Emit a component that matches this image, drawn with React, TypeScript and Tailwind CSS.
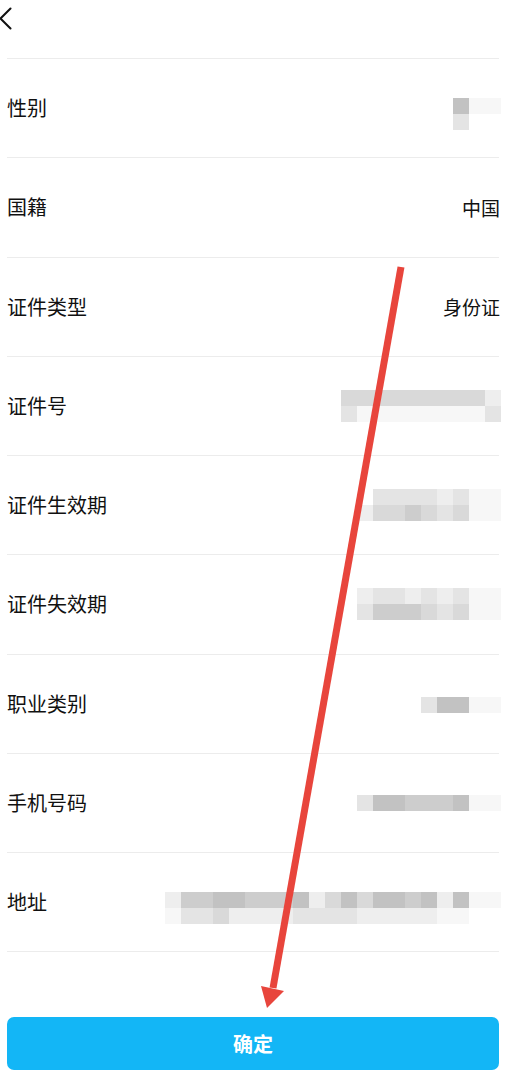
import React from "react";

const shade: Record<number, string> = {
  0: "bg-transparent",
  1: "bg-[#f7f7f7]",
  2: "bg-[#eeeeee]",
  3: "bg-[#e4e4e4]",
  4: "bg-[#d9d9d9]",
  5: "bg-[#cdcdcd]",
  6: "bg-[#c2c2c2]",
  7: "bg-[#b5b5b5]",
};

function Pix({ rows, cls = "" }: { rows: number[][]; cls?: string }) {
  return (
    <div className={"flex flex-col mr-[-2px] " + cls}>
      {rows.map((r, i) => (
        <div key={i} className="flex">
          {r.map((c, j) => (
            <div key={j} className={"w-[16px] h-[16px] " + shade[c]} />
          ))}
        </div>
      ))}
    </div>
  );
}

type Row = { label: string; value?: string; pix?: number[][]; pcls?: string };

const rows: Row[] = [
  { label: "性别", pix: [[6, 1, 1], [3, 0, 0]], pcls: "mt-[12px]" },
  { label: "国籍", value: "中国" },
  { label: "证件类型", value: "身份证" },
  {
    label: "证件号",
    pix: [
      [4, 4, 4, 4, 4, 4, 4, 4, 4, 2],
      [3, 1, 1, 1, 1, 1, 1, 1, 1, 3],
    ],
  },
  {
    label: "证件生效期",
    pix: [
      [0, 3, 3, 3, 3, 2, 3, 1, 1],
      [2, 4, 4, 5, 4, 3, 4, 1, 1],
    ],
  },
  {
    label: "证件失效期",
    pix: [
      [2, 3, 3, 2, 3, 2, 3, 1, 1],
      [3, 5, 5, 5, 4, 3, 4, 1, 1],
    ],
  },
  { label: "职业类别", pix: [[3, 6, 6, 1, 1]], pcls: "mt-[2px]" },
  { label: "手机号码", pix: [[3, 6, 6, 5, 5, 5, 6, 1, 1]] },
  {
    label: "地址",
    pix: [
      [2, 5, 5, 6, 6, 5, 5, 5, 6, 2, 4, 6, 4, 6, 6, 5, 6, 2, 6, 1, 1],
      [1, 3, 3, 4, 2, 2, 2, 2, 3, 3, 3, 3, 2, 2, 2, 2, 2, 1, 1, 0, 0],
    ],
    pcls: "mt-[12px]",
  },
];

export default function App() {
  return (
    <div
      className="relative w-[506px] h-[1080px] bg-white overflow-hidden text-[#111111]"
      style={{ fontFamily: '"Noto Sans CJK SC", "Noto Sans", sans-serif' }}
    >
      <div className="h-[58px] flex items-start">
        <svg width="14" height="24" viewBox="0 0 14 24" className="mt-[7px] ml-[-1px]">
          <polyline
            points="11.5,1.5 1.5,11.5 11.5,21.5"
            fill="none"
            stroke="#111"
            strokeWidth="2"
            strokeLinecap="round"
            strokeLinejoin="round"
          />
        </svg>
      </div>
      <div className="mx-[7px]">
        {rows.map((r) => (
          <div
            key={r.label}
            className="h-[99.25px] border-t border-[#ececec] flex items-center justify-between"
          >
            <span className="text-[20px] leading-none">{r.label}</span>
            {r.value && <span className="text-[19px] leading-none mr-[-1px]">{r.value}</span>}
            {r.pix && <Pix rows={r.pix} cls={r.pcls} />}
          </div>
        ))}
        <div className="border-t border-[#ececec]" />
      </div>
      <div className="mt-[65px] mx-[7px]">
        <button className="w-full h-[53px] rounded-[7px] bg-[#13b6f6] text-white text-[20px] font-bold flex items-center justify-center">
          确定
        </button>
      </div>
      <svg
        className="absolute inset-0 pointer-events-none"
        width="506"
        height="1080"
        viewBox="0 0 506 1080"
      >
        <line x1="401" y1="267" x2="273" y2="988" stroke="#e8453c" strokeWidth="7" />
        <polygon points="261,986 284,991 267,1008" fill="#e8453c" />
      </svg>
    </div>
  );
}
